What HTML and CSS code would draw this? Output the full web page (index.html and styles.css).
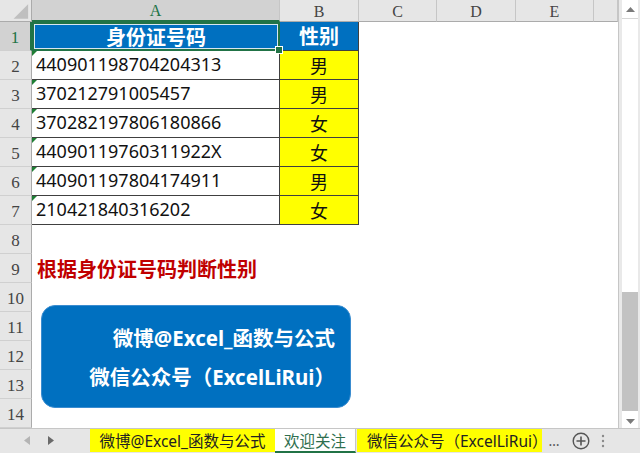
FILE: index.html
```html
<!DOCTYPE html>
<html lang="zh">
<head>
<meta charset="utf-8">
<title>根据身份证号码判断性别</title>
<link rel="stylesheet" href="styles.css">
</head>
<body>
<div class="app">
  <div class="main">
    <div class="sheet">
      <div class="corner"><svg width="32" height="22" viewBox="0 0 32 22"><polygon points="29,4 29,19 14,19" fill="#bfbfbf"/></svg></div>
      <div class="colhead sel">A</div>
      <div class="colhead">B</div>
      <div class="colhead">C</div>
      <div class="colhead">D</div>
      <div class="colhead">E</div>
      <div class="colhead last"></div>

      <div class="rowhead sel">1</div>
      <div class="cell th active">身份证号码</div>
      <div class="cell th">性别</div>
      <div class="rest"></div>

      <div class="rowhead">2</div>
      <div class="cell id">440901198704204313</div>
      <div class="cell sex">男</div>
      <div class="rest"></div>

      <div class="rowhead">3</div>
      <div class="cell id">370212791005457</div>
      <div class="cell sex">男</div>
      <div class="rest"></div>

      <div class="rowhead">4</div>
      <div class="cell id">370282197806180866</div>
      <div class="cell sex">女</div>
      <div class="rest"></div>

      <div class="rowhead">5</div>
      <div class="cell id">44090119760311922X</div>
      <div class="cell sex">女</div>
      <div class="rest"></div>

      <div class="rowhead">6</div>
      <div class="cell id">440901197804174911</div>
      <div class="cell sex">男</div>
      <div class="rest"></div>

      <div class="rowhead">7</div>
      <div class="cell id">210421840316202</div>
      <div class="cell sex">女</div>
      <div class="rest"></div>

      <div class="rowhead">8</div>
      <div class="blank"></div>

      <div class="rowhead">9</div>
      <div class="blank title">根据身份证号码判断性别</div>

      <div class="rowhead">10</div>
      <div class="blank"></div>
      <div class="rowhead">11</div>
      <div class="blank"></div>
      <div class="rowhead">12</div>
      <div class="blank"></div>
      <div class="rowhead">13</div>
      <div class="blank"></div>
      <div class="rowhead">14</div>
      <div class="blank"></div>

      <div class="card">
        <div class="card-line">微博@Excel_函数与公式</div>
        <div class="card-line">微信公众号（ExcelLiRui）</div>
      </div>
    </div>
    <div class="vscroll">
      <div class="sb-btn up"><svg width="9" height="5" viewBox="0 0 9 5"><polygon points="0,5 9,5 4.5,0" fill="#7a7a7a"/></svg></div>
      <div class="sb-track"><div class="sb-thumb"></div></div>
      <div class="sb-btn down"><svg width="9" height="5" viewBox="0 0 9 5"><polygon points="0,0 9,0 4.5,5" fill="#7a7a7a"/></svg></div>
    </div>
  </div>
  <div class="tabbar">
    <div class="tabnav">
      <svg class="nav-l" width="6" height="9" viewBox="0 0 6 9"><polygon points="6,0 6,9 0,4.5" fill="#b4b4b4"/></svg>
      <svg class="nav-r" width="6" height="9" viewBox="0 0 6 9"><polygon points="0,0 0,9 6,4.5" fill="#6a6a6a"/></svg>
    </div>
    <div class="tab yellow t1">微博@Excel_函数与公式</div>
    <div class="tab current">欢迎关注</div>
    <div class="tab yellow t3">微信公众号（ExcelLiRui）</div>
    <div class="more">…</div>
    <div class="add"><svg width="18" height="18" viewBox="0 0 18 18"><circle cx="9" cy="9" r="7.8" fill="none" stroke="#555" stroke-width="1.4"/><path d="M9 4.5v9M4.5 9h9" stroke="#555" stroke-width="1.6"/></svg></div>
    <div class="kebab"><svg width="4" height="14" viewBox="0 0 4 14"><circle cx="2" cy="2" r="1.2" fill="#8a8a8a"/><circle cx="2" cy="7" r="1.2" fill="#8a8a8a"/><circle cx="2" cy="12" r="1.2" fill="#8a8a8a"/></svg></div>
  </div>
</div>
</body>
</html>
```

FILE: styles.css
```css
* { box-sizing: border-box; }
html, body { margin: 0; padding: 0; background: #fff; }
body { font-family: "Noto Sans", "Noto Sans CJK SC", sans-serif; }

.app {
  width: 640px;
  height: 453px;
  overflow: hidden;
  display: flex;
  flex-direction: column;
}

.main {
  display: flex;
  height: 428px;
}

.sheet {
  position: relative;
  width: 618px;
  display: grid;
  grid-template-columns: 32px 248px 79px 78px 79px 78px 24px;
  grid-template-rows: 22px repeat(14, 29px);
}

.corner {
  background: #e6e6e6;
  border-right: 1px solid #ababab;
  border-bottom: 1px solid #ababab;
  display: flex;
}

.colhead {
  background: #e6e6e6;
  border-right: 1px solid #c6c6c6;
  border-bottom: 1px solid #ababab;
  font-family: "Liberation Serif", "DejaVu Serif", serif;
  font-size: 16px;
  color: #444;
  display: flex;
  align-items: center;
  justify-content: center;
  padding-top: 2px;
}
.colhead.sel {
  background: #d2d2d2;
  color: #217346;
  border-bottom: 2px solid #217346;
}
.colhead.last { border-right: 1px solid #c6c6c6; }

.rowhead {
  background: #e6e6e6;
  border-right: 1px solid #ababab;
  border-bottom: 1px solid #d0d0d0;
  font-family: "Liberation Serif", "DejaVu Serif", serif;
  font-size: 17px;
  color: #444;
  display: flex;
  align-items: center;
  justify-content: center;
  padding-top: 3px;
}
.rowhead.sel {
  background: #d2d2d2;
  color: #217346;
  border-right: 2px solid #217346;
}

.cell {
  position: relative;
  border-right: 1px solid #404040;
  border-bottom: 1px solid #404040;
  display: flex;
  align-items: center;
  white-space: nowrap;
}

.th {
  background: #0070c0;
  color: #fff;
  font-weight: 700;
  font-size: 20px;
  justify-content: center;
  padding-bottom: 1px;
}
.th.active {
  border: none;
  box-shadow: inset 0 0 0 2px #217346, inset 0 0 0 3px #d9e6f0;
}
.th.active::after {
  content: "";
  position: absolute;
  right: -3px;
  bottom: -3px;
  width: 6px;
  height: 6px;
  background: #217346;
  border: 1px solid #fff;
  z-index: 2;
}

.id {
  background: #fff;
  color: #111;
  font-size: 18px;
  padding-left: 4px;
  padding-bottom: 2px;
}
.id::before {
  content: "";
  position: absolute;
  left: 0;
  top: 0;
  border-top: 5px solid #1e7e34;
  border-right: 5px solid transparent;
}

.sex {
  background: #ffff00;
  color: #111;
  font-size: 18px;
  justify-content: center;
  font-family: "Noto Sans CJK SC", sans-serif;
}

.rest { grid-column: span 4; background: #fff; }
.blank { grid-column: span 6; background: #fff; }

.title {
  display: flex;
  align-items: center;
  padding-left: 5px;
  padding-bottom: 1px;
  color: #c00000;
  font-weight: 700;
  font-size: 20px;
  white-space: nowrap;
  font-family: "Noto Sans CJK SC", sans-serif;
}

.card {
  position: absolute;
  left: 41px;
  top: 305px;
  width: 310px;
  height: 103px;
  border-radius: 14px;
  background: #0070c0;
  border: 1px solid #3a8cd0;
  padding: 13px 15px 0 0;
  color: #fff;
  font-weight: 700;
  font-size: 20.5px;
  text-align: right;
}
.card-line {
  line-height: 39px;
  white-space: nowrap;
}

.vscroll {
  width: 22px;
  background: #e9e9e9;
  border-left: 1px solid #c6c6c6;
  display: flex;
  flex-direction: column;
  padding: 0 2px 0 3px;
}
.sb-btn {
  display: flex;
  align-items: center;
  justify-content: center;
  background: #fff;
}
.sb-btn.up { height: 19px; border-bottom: 1px solid #d6d6d6; }
.sb-btn.down { height: 14px; }
.sb-track {
  flex: 1;
  background: #fff;
  padding-top: 273px;
}
.sb-thumb {
  height: 119px;
  background: #c2c2c2;
}

.tabbar {
  height: 25px;
  background: #e6e6e6;
  border-top: 1px solid #c6c6c6;
  display: flex;
  align-items: flex-start;
  font-family: "Noto Sans", "Noto Sans CJK SC", sans-serif;
  font-size: 15.5px;
  color: #222;
}
.tabnav {
  width: 90px;
  height: 23px;
  display: flex;
  align-items: center;
  padding-left: 24px;
  gap: 18px;
}
.tab {
  height: 23px;
  display: flex;
  align-items: center;
  justify-content: center;
  white-space: nowrap;
}
.tab.yellow { background: #ffff00; }
.t1 { width: 185px; }
.t3 { width: 185px; margin-left: 1px; justify-content: flex-start; padding-left: 10px; }
.tab.current {
  width: 81px;
  background: #fff;
  color: #2f6f4f;
  border-bottom: 2px solid #217346;
  border-right: 1px solid #c6c6c6;
  height: 24px;
}
.more {
  width: 22px;
  height: 23px;
  display: flex;
  align-items: center;
  justify-content: center;
  color: #555;
  font-size: 14px;
  margin-left: 1px;
}
.add {
  width: 32px;
  height: 23px;
  display: flex;
  align-items: center;
  justify-content: center;
}
.kebab {
  width: 12px;
  height: 23px;
  display: flex;
  align-items: center;
  justify-content: center;
}
```
